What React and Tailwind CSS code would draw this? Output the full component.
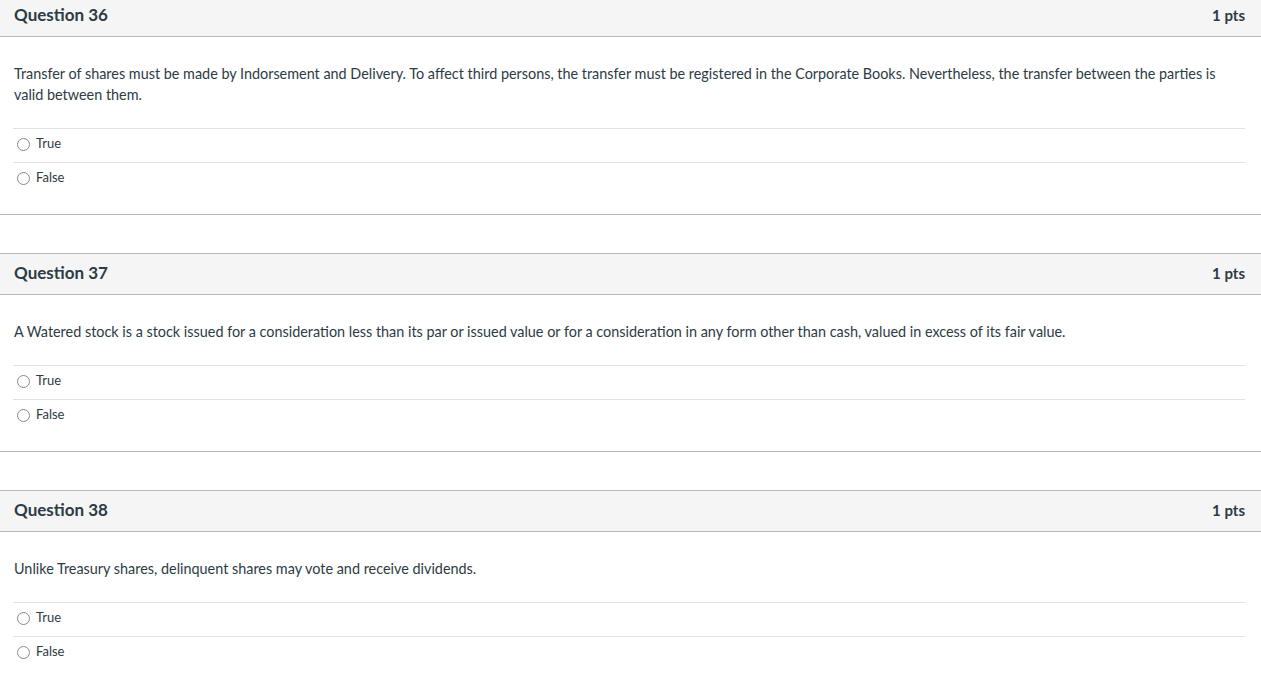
import React from 'react'

const questions = [
  {
    n: 36,
    text: 'Transfer of shares must be made by Indorsement and Delivery. To affect third persons, the transfer must be registered in the Corporate Books. Nevertheless, the transfer between the parties is valid between them.',
  },
  {
    n: 37,
    text: 'A Watered stock is a stock issued for a consideration less than its par or issued value or for a consideration in any form other than cash, valued in excess of its fair value.',
  },
  {
    n: 38,
    text: 'Unlike Treasury shares, delinquent shares may vote and receive dividends.',
  },
]

function Option({ label }) {
  return (
    <div className="flex items-center h-[34px] border-t border-[#e2e2e2] pl-[4px] pb-[3px]">
      <span className="w-[13px] h-[13px] rounded-full border border-[#8a8a8a] bg-white mr-[6px] mt-[1px]" />
      <span className="text-[13px] text-[#2d3b45]">{label}</span>
    </div>
  )
}

function Question({ q, first }) {
  return (
    <div className={first ? '-mt-[5px]' : 'mt-[38px]'}>
      <div className="flex items-center justify-between h-[42px] bg-[#f5f5f5] border-y border-[#b8b8b8] px-[14px]">
        <span className="text-[17px] font-bold text-[#2d3b45] -mt-[2px]">Question {q.n}</span>
        <span className="text-[15px] font-bold text-[#2d3b45] pr-[2px] -mt-[2px]">1 pts</span>
      </div>
      <div className="pl-[13px] pr-[16px] pt-[26px] pb-[18px] border-b border-[#b8b8b8]">
        <p className="text-[14.4px] leading-[21px] text-[#2d3b45] mb-[23px] pl-[1px]">{q.text}</p>
        <Option label="True" />
        <Option label="False" />
      </div>
    </div>
  )
}

export default function App() {
  return (
    <div className="w-[1261px] h-[683px] overflow-hidden bg-white" style={{ fontFamily: 'Lato, "Noto Sans", sans-serif' }}>
      {questions.map((q, i) => (
        <Question key={q.n} q={q} first={i === 0} />
      ))}
    </div>
  )
}
